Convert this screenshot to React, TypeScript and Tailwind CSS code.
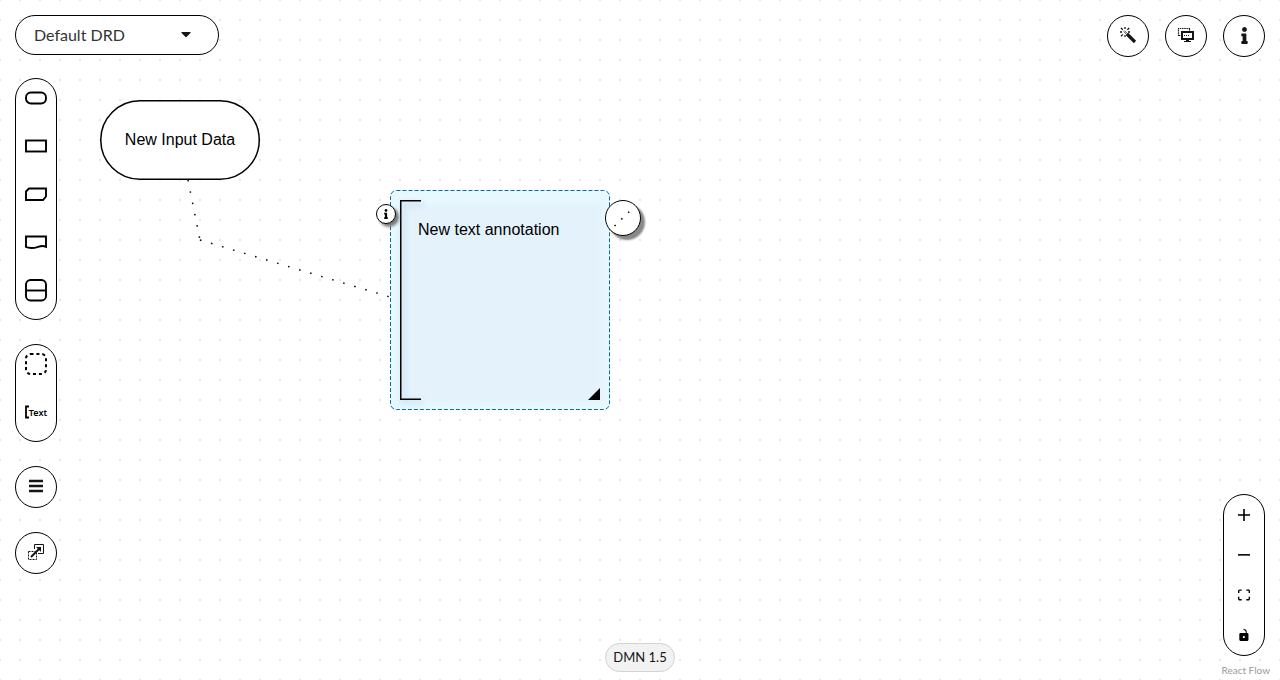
import type { ReactNode } from "react";
import { FaCaretDown, FaInfo } from "react-icons/fa";

const pill = "flex flex-col rounded-full border border-black bg-white";
const round =
  "flex size-[42px] items-center justify-center rounded-full border border-black bg-white pb-0.5 text-[#151515]";

function PaletteButton({ label, children }: { label: string; children: ReactNode }) {
  return (
    <button type="button" aria-label={label} className="mb-2 flex h-10 items-center justify-center pb-0.5">
      {children}
    </button>
  );
}

function NodeIcon({ children }: { children: ReactNode }) {
  return (
    <svg width="24" height="24" viewBox="0 0 24 24" fill="none" stroke="#000" strokeWidth="1.9" aria-hidden="true">
      {children}
    </svg>
  );
}

function ControlButton({ label, viewBox, path }: { label: string; viewBox: string; path: string }) {
  return (
    <button type="button" aria-label={label} className="flex h-10 items-center justify-center">
      <svg className="size-3" viewBox={viewBox} aria-hidden="true">
        <path d={path} />
      </svg>
    </button>
  );
}

function Diagram() {
  return (
    <div className="absolute inset-0">
      <svg className="absolute inset-0 h-full w-full" aria-hidden="true">
        <defs>
          <pattern id="grid" x="-10" y="-10" width="20" height="20" patternUnits="userSpaceOnUse">
            <circle cx="10" cy="10" r="1" fill="#dfdfdf" />
          </pattern>
        </defs>
        <rect width="100%" height="100%" fill="url(#grid)" />
        <path
          d="M188 180L200 240M200 240L400 300"
          fill="none"
          stroke="#000"
          strokeWidth="1.5"
          strokeDasharray="1.5 10"
        />
      </svg>

      <div className="absolute left-[100px] top-[100px] flex h-20 w-40 items-center justify-center text-base">
        <svg className="absolute inset-0" width="160" height="80" aria-hidden="true">
          <rect
            x="0.75"
            y="0.75"
            width="158.5"
            height="78.5"
            rx="39.25"
            fill="#fff"
            fillOpacity="0.9"
            stroke="#000"
            strokeWidth="1.5"
          />
        </svg>
        <span className="relative">New Input Data</span>
      </div>

      <div className="absolute left-[390px] top-[190px] size-[220px]">
        <svg className="absolute inset-0" width="220" height="220" fill="none" aria-hidden="true">
          <rect x="0.5" y="0.5" width="219" height="219" rx="6" fill="#e8f8ff" />
          <rect className="blur-[2px]" x="13" y="14" width="199" height="198" fill="#e4f2fb" />
          <rect x="0.5" y="0.5" width="219" height="219" rx="6" stroke="#006ba4" strokeDasharray="4 2" />
          <path
            className="drop-shadow-[2px_3px_3px_#9cc8e2]"
            d="M31 10.75H10.75V209.25H31"
            stroke="#000"
            strokeWidth="1.5"
          />
          <path d="M210 198V210H198Z" fill="#000" />
        </svg>
        <p className="relative px-7 pt-7 text-base leading-6">New text annotation</p>
        <button
          type="button"
          aria-label="Properties"
          className="absolute -left-3.5 top-3.5 flex size-5 items-center justify-center rounded-full border border-black bg-white shadow-[3px_3px_3px_#777]"
        >
          <FaInfo size={10} />
        </button>
        <button
          type="button"
          aria-label="Add association"
          className="absolute left-[215px] top-2.5 flex size-9 items-center justify-center rounded-full border border-black bg-white shadow-[4px_4px_2px_#888]"
        >
          <svg width="24" height="24" aria-hidden="true">
            <path d="M3.5 20L20 4" stroke="#000" strokeWidth="1.5" strokeDasharray="1.5 8" />
          </svg>
        </button>
      </div>
    </div>
  );
}

export default function App() {
  return (
    <main className="relative flex h-screen flex-col overflow-hidden bg-white font-['Liberation_Sans',sans-serif] text-black">
      <Diagram />

      <header className="relative flex items-start justify-between p-[15px] pb-0">
        <div className="relative">
          <select
            aria-label="Diagram"
            className="h-10 w-[204px] appearance-none rounded-full border border-black bg-white pl-[18px] font-['Lato',sans-serif] text-base text-[#333]"
          >
            <option>Default DRD</option>
          </select>
          <FaCaretDown className="pointer-events-none absolute right-[25px] top-[11px] text-[#151515]" size={16} />
        </div>
        <div className="flex gap-4">
          <button type="button" aria-label="Autolayout" className={round}>
            <svg width="18" height="18" viewBox="0 0 18 18" fill="none" stroke="currentColor" aria-hidden="true">
              <path d="M8 8L16 16" strokeWidth="3.2" />
              <path d="M5.4 4.600L8.800 8M4.600 5.400L8 8.800" strokeWidth="0.700" />
              <path
                d="M6 1V3M2 2L3.800 3.800M1 6H3M2 10.200L3.800 8.400M6 9V11M10.200 2L8.400 3.800M9 6H11"
                strokeWidth="1.300"
              />
            </svg>
          </button>
          <button type="button" aria-label="Overlays" className={round}>
            <svg width="18" height="18" viewBox="0 0 18 18" fill="none" stroke="currentColor" aria-hidden="true">
              <path d="M1.500 10V2.500H13M1.500 9.500H4M12.500 3V5" strokeWidth="1.200" strokeDasharray="1.500 0.700" />
              <rect x="5" y="6" width="11" height="7" strokeWidth="2" />
              <path d="M7 9.500H13" strokeDasharray="1 1" />
              <path d="M9 14.500H12M7 15.500H14" />
            </svg>
          </button>
          <button type="button" aria-label="Properties panel" className={round}>
            <FaInfo size={17} />
          </button>
        </div>
      </header>

      <div className="relative grid flex-1 grid-cols-[1fr_auto_1fr] px-[15px] pt-[21px]">
        <aside className="flex w-[42px] flex-col gap-6 self-start">
          <div className={pill}>
            <PaletteButton label="Input data">
              <NodeIcon>
                <rect x="2" y="6.500" width="20" height="11" rx="5" />
              </NodeIcon>
            </PaletteButton>
            <PaletteButton label="Decision">
              <NodeIcon>
                <rect x="2" y="6.500" width="20" height="11" />
              </NodeIcon>
            </PaletteButton>
            <PaletteButton label="Business knowledge model">
              <NodeIcon>
                <path d="M5 6.500H22V14.500L19 18H2V9.500Z" />
              </NodeIcon>
            </PaletteButton>
            <PaletteButton label="Knowledge source">
              <NodeIcon>
                <path d="M2 6.500H22V16.800C16.500 14 14 18.200 7.500 18C4.500 17.900 3 17.500 2 17Z" />
              </NodeIcon>
            </PaletteButton>
            <PaletteButton label="Decision service">
              <NodeIcon>
                <rect x="2" y="2" width="20" height="20.500" rx="4.500" />
                <path d="M2 12.500H22" />
              </NodeIcon>
            </PaletteButton>
          </div>

          <div className={pill}>
            <PaletteButton label="Group">
              <NodeIcon>
                <rect x="2" y="2" width="20" height="20" rx="4.500" strokeWidth="2" strokeDasharray="3 2.900" />
              </NodeIcon>
            </PaletteButton>
            <PaletteButton label="Text annotation">
              <svg width="4" height="14" viewBox="0 0 4 14" fill="none" stroke="#000" strokeWidth="1.800" aria-hidden="true">
                <path d="M4 1.500H1V12.500H4" />
              </svg>
              <span className="pt-0.5 font-['Noto_Sans',sans-serif] text-[9px] font-semibold leading-3">Text</span>
            </PaletteButton>
          </div>

          <button type="button" aria-label="DRG nodes" className={round}>
            <svg width="14" height="14" viewBox="0 0 14 14" aria-hidden="true">
              <path
                d="M0 0.800H14V3.300H0ZM0 5.800H14V8.300H0ZM0 10.800H14V13.300H0Z"
                fill="currentColor"
              />
            </svg>
          </button>
          <button type="button" aria-label="External nodes" className={round}>
            <svg width="16" height="16" viewBox="0 0 16 16" fill="none" stroke="currentColor" aria-hidden="true">
              <path d="M6.500 5V0.500H15.500V9.500H10" />
              <rect x="0.500" y="7.500" width="8" height="8" strokeDasharray="2 1" />
              <path d="M3 13L11 5" strokeWidth="2" />
              <path d="M8 3H13V8Z" fill="currentColor" stroke="none" />
            </svg>
          </button>
        </aside>

        <span className="mb-2 self-end rounded-full border border-[#d2d2d2] bg-[#f2f2f2] px-[7px] font-['Lato',sans-serif] text-[13px] leading-[27px] text-[#151515]">
          DMN 1.5
        </span>

        <aside className="flex flex-col items-end self-end">
          <div className={`${pill} w-[42px]`}>
            <ControlButton
              label="Zoom in"
              viewBox="0 0 32 32"
              path="M32 18.133H18.133V32h-4.266V18.133H0v-4.266h13.867V0h4.266v13.867H32z"
            />
            <ControlButton label="Zoom out" viewBox="0 0 32 5" path="M0 0h32v4.2H0z" />
            <ControlButton
              label="Fit view"
              viewBox="0 0 32 30"
              path="M3.692 4.63c0-.53.4-.938.939-.938h5.215V0H4.708C2.13 0 0 2.054 0 4.63v5.216h3.692V4.631zM27.354 0h-5.2v3.692h5.17c.53 0 .984.4.984.939v5.215H32V4.631A4.624 4.624 0 0027.354 0zm.954 24.83c0 .532-.4.94-.939.94h-5.215v3.768h5.215c2.577 0 4.631-2.13 4.631-4.707v-5.139h-3.692v5.139zm-23.677.94c-.531 0-.939-.4-.939-.94v-5.138H0v5.139c0 2.577 2.13 4.707 4.708 4.707h5.138V25.77H4.631z"
            />
            <ControlButton
              label="Lock"
              viewBox="0 0 25 32"
              path="M21.333 10.667H19.81V7.619C19.81 3.429 16.38 0 12.19 0c-4.114 1.828-1.37 2.133.305 2.438 1.676.305 4.42 2.59 4.42 5.181v3.048H3.047A3.056 3.056 0 000 13.714v15.238A3.056 3.056 0 003.048 32h18.285a3.056 3.056 0 003.048-3.048V13.714a3.056 3.056 0 00-3.048-3.047zM12.19 24.533a3.056 3.056 0 01-3.047-3.047 3.056 3.056 0 013.047-3.048 3.056 3.056 0 013.048 3.048 3.056 3.056 0 01-3.048 3.047z"
            />
          </div>
          <a
            href="#react-flow"
            className="-mr-[5px] pb-[3px] pt-[7px] font-['Lato',sans-serif] text-[10px] leading-[14px] text-[#999]"
          >
            React Flow
          </a>
        </aside>
      </div>
    </main>
  );
}
